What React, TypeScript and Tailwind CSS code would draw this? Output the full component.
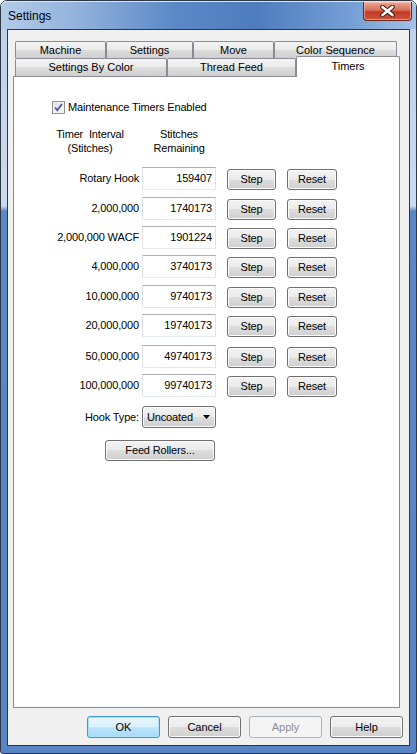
import React from "react";

const FONT = "font-['Liberation_Sans',Arial,sans-serif]";

const BTN =
  "flex items-center justify-center rounded-[3px] border border-[#707070] bg-[linear-gradient(to_bottom,#f2f2f2_0%,#ebebeb_50%,#dddddd_50%,#cfcfcf_100%)] shadow-[inset_0_0_0_1px_#fbfbfb] text-[11px] text-black";

const TAB =
  "flex items-center justify-center border-x border-t border-[#898c95] rounded-t-[2px] bg-[linear-gradient(to_bottom,#f3f3f3_0%,#ebebeb_50%,#dddddd_50%,#cfcfcf_100%)] text-[11px] text-black";

const TIMERS = [
  { label: "Rotary Hook", value: "159407", mt: "mt-[12px]" },
  { label: "2,000,000", value: "1740173", mt: "mt-[7px]" },
  { label: "2,000,000 WACF", value: "1901224", mt: "mt-[6px]" },
  { label: "4,000,000", value: "3740173", mt: "mt-[6px]" },
  { label: "10,000,000", value: "9740173", mt: "mt-[7px]" },
  { label: "20,000,000", value: "19740173", mt: "mt-[6px]" },
  { label: "50,000,000", value: "49740173", mt: "mt-[8px]" },
  { label: "100,000,000", value: "99740173", mt: "mt-[6px]" },
];

function CloseButton() {
  return (
    <div className="mt-[1px] mr-[4px] flex h-[19px] w-[49px] items-center justify-center rounded-b-[4px] border border-t-0 border-[#6a2319] bg-[linear-gradient(to_bottom,#e9a898_0%,#d9705c_45%,#c53a22_55%,#c9553c_100%)] shadow-[inset_0_0_0_1px_rgba(255,210,200,0.55)]">
      <svg width="15" height="12" viewBox="0 0 15 12">
        <path d="M2.5 2 L12.5 10 M12.5 2 L2.5 10" stroke="#4a1a12" strokeWidth="4.6" strokeLinecap="round" />
        <path d="M2.5 2 L12.5 10 M12.5 2 L2.5 10" stroke="#ffffff" strokeWidth="2.6" strokeLinecap="round" />
      </svg>
    </div>
  );
}

function CheckBox() {
  return (
    <div className="flex h-[13px] w-[13px] items-center justify-center border border-[#8e8f8f] bg-[linear-gradient(to_bottom_right,#dcdcdc,#ffffff)] shadow-[inset_0_0_0_1px_#f4f4f4]">
      <svg width="11" height="11" viewBox="0 0 11 11">
        <path d="M2 5.5 L4.3 8.2 L9 2" fill="none" stroke="#4a5d8f" strokeWidth="1.8" />
      </svg>
    </div>
  );
}

export default function App() {
  return (
    <div
      className={`${FONT} flex h-[754px] w-[417px] flex-col rounded-t-[7px] rounded-b-[3px] border border-[#2e3744] bg-[linear-gradient(to_bottom,#bcd0ea_0px,#cbdbef_205px,#5b87c7_210px,#5884c4_100%)]`}
    >
      {/* title bar */}
      <div className="flex h-[28px] items-start justify-between rounded-t-[6px] bg-[linear-gradient(to_right,#b4cbe9_0%,#93b3dd_18%,#5a88c7_42%,#4e7dbf_62%,#76a0d6_85%,#a4c0e5_100%)] shadow-[inset_0_1px_0_#d6e4f5]">
        <div className="ml-[7px] mt-[8px] text-[12px] leading-[14px] text-black">Settings</div>
        <CloseButton />
      </div>

      {/* client area */}
      <div className="mx-[6px] flex h-[717px] flex-col border border-[#24385a] bg-[#f0f0f0] pl-[5px] pr-[6px] pt-[11px]">
        {/* tabs */}
        <div className="ml-[2px] flex h-[17px]">
          <div className={`${TAB} w-[91px]`}>Machine</div>
          <div className={`${TAB} w-[87px]`}>Settings</div>
          <div className={`${TAB} w-[81px]`}>Move</div>
          <div className={`${TAB} w-[123px]`}>Color Sequence</div>
        </div>
        <div className="ml-[2px] flex h-[18px] items-end">
          <div className={`${TAB} h-[18px] w-[152px]`}>Settings By Color</div>
          <div className={`${TAB} h-[18px] w-[129px]`}>Thread Feed</div>
          <div className="relative z-10 -mb-[1px] flex h-[21px] w-[104px] items-center justify-center rounded-t-[2px] border-x border-t border-[#898c95] bg-white pb-[1px] text-[11px] text-black">
            Timers
          </div>
        </div>

        {/* tab page */}
        <div className="flex h-[632px] w-[387px] flex-col border border-[#898c95] bg-white text-[11px] tracking-[-0.15px] text-black">
          <div className="ml-[38px] mt-[24px] flex h-[13px] items-center gap-[3px]">
            <CheckBox />
            <span className="leading-[13px]">Maintenance Timers Enabled</span>
          </div>

          <div className="ml-[35px] mt-[13px] flex leading-[14px]">
            <div className="w-[82px] text-center">
              <div className="whitespace-pre">Timer  Interval</div>
              <div>(Stitches)</div>
            </div>
            <div className="ml-[19px] w-[58px] text-center">
              <div>Stitches</div>
              <div>Remaining</div>
            </div>
          </div>

          {TIMERS.map((t) => (
            <div key={t.label} className={`${t.mt} flex h-[23px] items-center`}>
              <div className="w-[125px] text-right">{t.label}</div>
              <div className="ml-[3px] flex h-[23px] w-[74px] items-start justify-end border border-[#abadb3] border-b-[#e3e9ef] border-x-[#e2e3ea] bg-white pr-[3px] pt-[3px] leading-[14px]">
                {t.value}
              </div>
              <div className={`${BTN} ml-[11px] mt-[2px] h-[21px] w-[49px]`}>Step</div>
              <div className={`${BTN} ml-[11px] mt-[2px] h-[21px] w-[50px]`}>Reset</div>
            </div>
          ))}

          <div className="mt-[9px] flex h-[22px] items-center">
            <div className="w-[125px] text-right">Hook Type:</div>
            <div className="ml-[3px] flex h-[22px] w-[74px] items-center justify-between rounded-[3px] border border-[#707070] bg-[linear-gradient(to_bottom,#f2f2f2_0%,#ebebeb_50%,#dddddd_50%,#cfcfcf_100%)] pl-[4px] pr-[5px] shadow-[inset_0_0_0_1px_#fbfbfb]">
              <span>Uncoated</span>
              <svg width="7" height="4" viewBox="0 0 7 4">
                <path d="M0 0 H7 L3.5 4 Z" fill="#000" />
              </svg>
            </div>
          </div>

          <div className={`${BTN} ml-[91px] mt-[12px] h-[21px] w-[110px]`}>Feed Rollers...</div>
        </div>

        {/* dialog buttons */}
        <div className="mt-[8px] flex justify-end gap-[8px]">
          <div className="flex h-[22px] w-[73px] items-center justify-center rounded-[3px] border border-[#3c9ad8] bg-[linear-gradient(to_bottom,#eaf6fd_0%,#d9f0fc_50%,#bee6fd_50%,#a7d9f5_100%)] text-[11px] text-black shadow-[inset_0_0_0_1px_#a9e1f9]">
            OK
          </div>
          <div className={`${BTN} h-[22px] w-[73px]`}>Cancel</div>
          <div className="flex h-[22px] w-[73px] items-center justify-center rounded-[3px] border border-[#adb2b5] bg-[#f4f4f4] text-[11px] text-[#8d8d8d]">
            Apply
          </div>
          <div className={`${BTN} h-[22px] w-[73px]`}>Help</div>
        </div>
      </div>
    </div>
  );
}
